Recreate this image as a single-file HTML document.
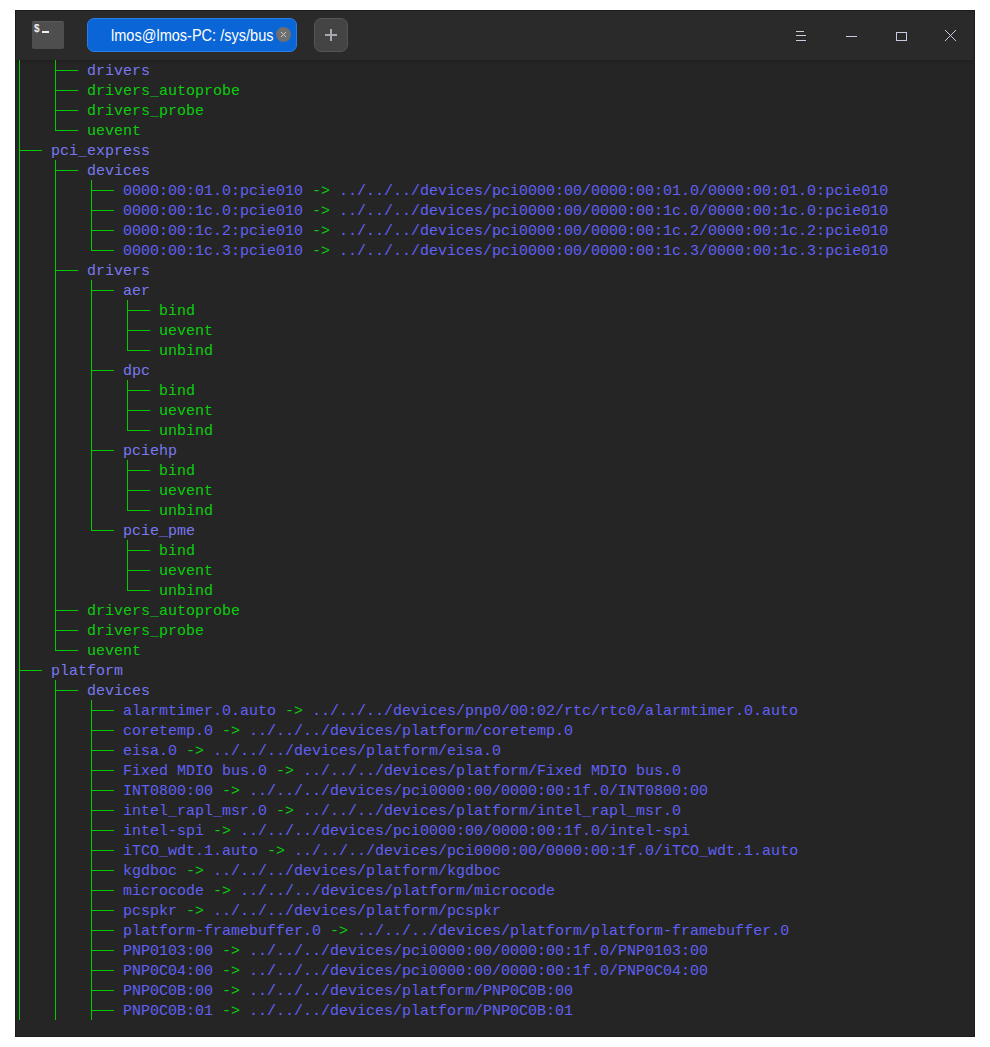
<!DOCTYPE html>
<html><head><meta charset="utf-8">
<style>
html,body{margin:0;padding:0;background:#fff;width:990px;height:1047px;overflow:hidden;position:relative}
.win{position:absolute;left:15px;top:10px;width:960px;height:1027px;background:#252525;box-sizing:border-box;border:1px solid #1c1c1c}
.hdr{position:absolute;left:15px;top:10px;width:960px;height:50px;background:#2a2a2a;border-top:1px solid #1b1b1b;border-right:1px solid #1b1b1b;border-left:1px solid #1b1b1b;box-sizing:border-box}
.shadow{position:absolute;left:16px;top:60px;width:958px;height:5px;background:linear-gradient(#202020,#252525)}
.icon{position:absolute;left:32px;top:21px;width:32px;height:28px;background:#4e4e4e;border-radius:2px;border-top:1px solid #5a5a5a;box-sizing:border-box}
.icon .dol{position:absolute;left:2px;top:2px;font:bold 10px/10px "Liberation Sans",sans-serif;color:#f0f0f0}
.icon .us{position:absolute;left:10px;top:9px;width:7px;height:2px;background:#f0f0f0}
.tab{position:absolute;left:87px;top:18px;width:210px;height:34px;background:#0a66d6;border-radius:7px;box-sizing:border-box;border:1px solid #2a7ee6}
.tab .t{position:absolute;left:23px;top:6.5px;font:16px/20px "Liberation Sans",sans-serif;color:#fff;white-space:pre;transform:scaleX(0.908);transform-origin:0 0}
.tab .x{position:absolute;left:187.7px;top:8.4px;width:15px;height:15px;border-radius:50%;background:#6f6f6f}
.plus{position:absolute;left:314px;top:18px;width:34px;height:34px;background:#444;border:1px solid #555;border-radius:7px;box-sizing:border-box}
.tree{position:absolute;left:0;top:0}
.tree rect{fill:#00cc00}
.row{position:absolute;height:20px;line-height:20px;font:15px/20px "Liberation Mono",monospace;white-space:pre}
.d{color:#7878f0}
.l{color:#6060f4}
.f{color:#0ccc0c}
</style></head><body>
<div class="win"></div>
<div class="hdr"></div>
<div class="shadow"></div>
<div class="icon"><div class="dol">$</div><div class="us"></div></div>
<div class="tab"><div class="t">lmos@lmos-PC: /sys/bus</div><div class="x"><svg width="15" height="15" style="position:absolute;left:0;top:0"><path d="M5 5L10 10M10 5L5 10" stroke="#c8c8c8" stroke-width="1"/></svg></div></div>
<div class="plus"><svg width="34" height="34" style="position:absolute;left:-1px;top:-1px"><rect x="11" y="16" width="12" height="2" fill="#a8a8b0"/><rect x="16" y="11" width="2" height="12" fill="#a8a8b0"/></svg></div>
<svg width="990" height="60" style="position:absolute;left:0;top:0">
<g fill="#c8cce0" shape-rendering="crispEdges">
<rect x="796" y="31" width="8" height="1"/>
<rect x="796" y="35" width="10" height="1"/>
<rect x="796" y="40" width="10" height="1"/>
<rect x="846" y="36" width="11" height="1"/>
</g>
<rect x="896.5" y="32.5" width="10" height="8" fill="none" stroke="#c8cce0" stroke-width="1"/>
<path d="M945 30L956 41M956 30L945 41" stroke="#c8cce0" stroke-width="1"/>
</svg>
<svg class="tree" width="990" height="1047" shape-rendering="crispEdges"><rect x="19" y="60" width="1" height="960"/><rect x="55" y="60" width="1" height="71"/><rect x="55" y="160" width="1" height="491"/><rect x="55" y="680" width="1" height="340"/><rect x="91" y="180" width="1" height="71"/><rect x="91" y="280" width="1" height="251"/><rect x="91" y="700" width="1" height="320"/><rect x="127" y="300" width="1" height="51"/><rect x="127" y="380" width="1" height="51"/><rect x="127" y="460" width="1" height="51"/><rect x="127" y="540" width="1" height="51"/><rect x="55" y="70" width="23" height="1"/><rect x="55" y="90" width="23" height="1"/><rect x="55" y="110" width="23" height="1"/><rect x="55" y="130" width="23" height="1"/><rect x="19" y="150" width="23" height="1"/><rect x="55" y="170" width="23" height="1"/><rect x="91" y="190" width="23" height="1"/><rect x="91" y="210" width="23" height="1"/><rect x="91" y="230" width="23" height="1"/><rect x="91" y="250" width="23" height="1"/><rect x="55" y="270" width="23" height="1"/><rect x="91" y="290" width="23" height="1"/><rect x="127" y="310" width="23" height="1"/><rect x="127" y="330" width="23" height="1"/><rect x="127" y="350" width="23" height="1"/><rect x="91" y="370" width="23" height="1"/><rect x="127" y="390" width="23" height="1"/><rect x="127" y="410" width="23" height="1"/><rect x="127" y="430" width="23" height="1"/><rect x="91" y="450" width="23" height="1"/><rect x="127" y="470" width="23" height="1"/><rect x="127" y="490" width="23" height="1"/><rect x="127" y="510" width="23" height="1"/><rect x="91" y="530" width="23" height="1"/><rect x="127" y="550" width="23" height="1"/><rect x="127" y="570" width="23" height="1"/><rect x="127" y="590" width="23" height="1"/><rect x="55" y="610" width="23" height="1"/><rect x="55" y="630" width="23" height="1"/><rect x="55" y="650" width="23" height="1"/><rect x="19" y="670" width="23" height="1"/><rect x="55" y="690" width="23" height="1"/><rect x="91" y="710" width="23" height="1"/><rect x="91" y="730" width="23" height="1"/><rect x="91" y="750" width="23" height="1"/><rect x="91" y="770" width="23" height="1"/><rect x="91" y="790" width="23" height="1"/><rect x="91" y="810" width="23" height="1"/><rect x="91" y="830" width="23" height="1"/><rect x="91" y="850" width="23" height="1"/><rect x="91" y="870" width="23" height="1"/><rect x="91" y="890" width="23" height="1"/><rect x="91" y="910" width="23" height="1"/><rect x="91" y="930" width="23" height="1"/><rect x="91" y="950" width="23" height="1"/><rect x="91" y="970" width="23" height="1"/><rect x="91" y="990" width="23" height="1"/><rect x="91" y="1010" width="23" height="1"/></svg>
<div class="row" style="top:62px;left:87px"><span class="d">drivers</span></div>
<div class="row" style="top:82px;left:87px"><span class="f">drivers_autoprobe</span></div>
<div class="row" style="top:102px;left:87px"><span class="f">drivers_probe</span></div>
<div class="row" style="top:122px;left:87px"><span class="f">uevent</span></div>
<div class="row" style="top:142px;left:51px"><span class="d">pci_express</span></div>
<div class="row" style="top:162px;left:87px"><span class="d">devices</span></div>
<div class="row" style="top:182px;left:123px"><span class="l">0000:00:01.0:pcie010</span><span class="f"> -&gt; </span><span class="l">../../../devices/pci0000:00/0000:00:01.0/0000:00:01.0:pcie010</span></div>
<div class="row" style="top:202px;left:123px"><span class="l">0000:00:1c.0:pcie010</span><span class="f"> -&gt; </span><span class="l">../../../devices/pci0000:00/0000:00:1c.0/0000:00:1c.0:pcie010</span></div>
<div class="row" style="top:222px;left:123px"><span class="l">0000:00:1c.2:pcie010</span><span class="f"> -&gt; </span><span class="l">../../../devices/pci0000:00/0000:00:1c.2/0000:00:1c.2:pcie010</span></div>
<div class="row" style="top:242px;left:123px"><span class="l">0000:00:1c.3:pcie010</span><span class="f"> -&gt; </span><span class="l">../../../devices/pci0000:00/0000:00:1c.3/0000:00:1c.3:pcie010</span></div>
<div class="row" style="top:262px;left:87px"><span class="d">drivers</span></div>
<div class="row" style="top:282px;left:123px"><span class="d">aer</span></div>
<div class="row" style="top:302px;left:159px"><span class="f">bind</span></div>
<div class="row" style="top:322px;left:159px"><span class="f">uevent</span></div>
<div class="row" style="top:342px;left:159px"><span class="f">unbind</span></div>
<div class="row" style="top:362px;left:123px"><span class="d">dpc</span></div>
<div class="row" style="top:382px;left:159px"><span class="f">bind</span></div>
<div class="row" style="top:402px;left:159px"><span class="f">uevent</span></div>
<div class="row" style="top:422px;left:159px"><span class="f">unbind</span></div>
<div class="row" style="top:442px;left:123px"><span class="d">pciehp</span></div>
<div class="row" style="top:462px;left:159px"><span class="f">bind</span></div>
<div class="row" style="top:482px;left:159px"><span class="f">uevent</span></div>
<div class="row" style="top:502px;left:159px"><span class="f">unbind</span></div>
<div class="row" style="top:522px;left:123px"><span class="d">pcie_pme</span></div>
<div class="row" style="top:542px;left:159px"><span class="f">bind</span></div>
<div class="row" style="top:562px;left:159px"><span class="f">uevent</span></div>
<div class="row" style="top:582px;left:159px"><span class="f">unbind</span></div>
<div class="row" style="top:602px;left:87px"><span class="f">drivers_autoprobe</span></div>
<div class="row" style="top:622px;left:87px"><span class="f">drivers_probe</span></div>
<div class="row" style="top:642px;left:87px"><span class="f">uevent</span></div>
<div class="row" style="top:662px;left:51px"><span class="d">platform</span></div>
<div class="row" style="top:682px;left:87px"><span class="d">devices</span></div>
<div class="row" style="top:702px;left:123px"><span class="l">alarmtimer.0.auto</span><span class="f"> -&gt; </span><span class="l">../../../devices/pnp0/00:02/rtc/rtc0/alarmtimer.0.auto</span></div>
<div class="row" style="top:722px;left:123px"><span class="l">coretemp.0</span><span class="f"> -&gt; </span><span class="l">../../../devices/platform/coretemp.0</span></div>
<div class="row" style="top:742px;left:123px"><span class="l">eisa.0</span><span class="f"> -&gt; </span><span class="l">../../../devices/platform/eisa.0</span></div>
<div class="row" style="top:762px;left:123px"><span class="l">Fixed MDIO bus.0</span><span class="f"> -&gt; </span><span class="l">../../../devices/platform/Fixed MDIO bus.0</span></div>
<div class="row" style="top:782px;left:123px"><span class="l">INT0800:00</span><span class="f"> -&gt; </span><span class="l">../../../devices/pci0000:00/0000:00:1f.0/INT0800:00</span></div>
<div class="row" style="top:802px;left:123px"><span class="l">intel_rapl_msr.0</span><span class="f"> -&gt; </span><span class="l">../../../devices/platform/intel_rapl_msr.0</span></div>
<div class="row" style="top:822px;left:123px"><span class="l">intel-spi</span><span class="f"> -&gt; </span><span class="l">../../../devices/pci0000:00/0000:00:1f.0/intel-spi</span></div>
<div class="row" style="top:842px;left:123px"><span class="l">iTCO_wdt.1.auto</span><span class="f"> -&gt; </span><span class="l">../../../devices/pci0000:00/0000:00:1f.0/iTCO_wdt.1.auto</span></div>
<div class="row" style="top:862px;left:123px"><span class="l">kgdboc</span><span class="f"> -&gt; </span><span class="l">../../../devices/platform/kgdboc</span></div>
<div class="row" style="top:882px;left:123px"><span class="l">microcode</span><span class="f"> -&gt; </span><span class="l">../../../devices/platform/microcode</span></div>
<div class="row" style="top:902px;left:123px"><span class="l">pcspkr</span><span class="f"> -&gt; </span><span class="l">../../../devices/platform/pcspkr</span></div>
<div class="row" style="top:922px;left:123px"><span class="l">platform-framebuffer.0</span><span class="f"> -&gt; </span><span class="l">../../../devices/platform/platform-framebuffer.0</span></div>
<div class="row" style="top:942px;left:123px"><span class="l">PNP0103:00</span><span class="f"> -&gt; </span><span class="l">../../../devices/pci0000:00/0000:00:1f.0/PNP0103:00</span></div>
<div class="row" style="top:962px;left:123px"><span class="l">PNP0C04:00</span><span class="f"> -&gt; </span><span class="l">../../../devices/pci0000:00/0000:00:1f.0/PNP0C04:00</span></div>
<div class="row" style="top:982px;left:123px"><span class="l">PNP0C0B:00</span><span class="f"> -&gt; </span><span class="l">../../../devices/platform/PNP0C0B:00</span></div>
<div class="row" style="top:1002px;left:123px"><span class="l">PNP0C0B:01</span><span class="f"> -&gt; </span><span class="l">../../../devices/platform/PNP0C0B:01</span></div>
</body></html>
